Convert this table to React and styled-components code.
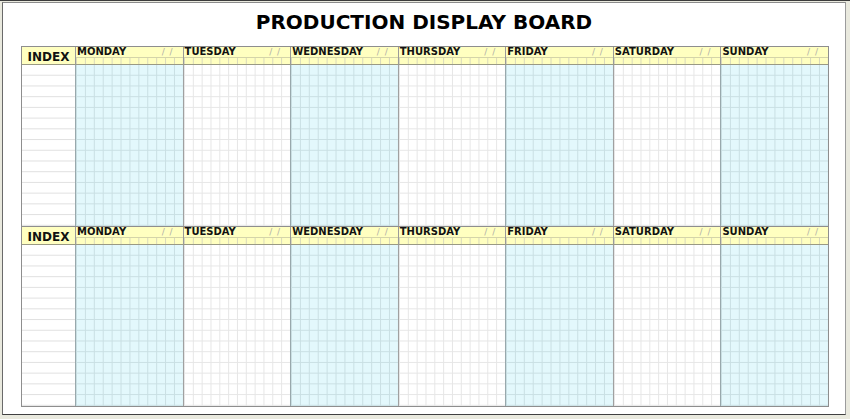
import React from 'react';
import styled, { createGlobalStyle } from 'styled-components';

const DAYS = ['MONDAY', 'TUESDAY', 'WEDNESDAY', 'THURSDAY', 'FRIDAY', 'SATURDAY', 'SUNDAY'];

const GlobalStyle = createGlobalStyle`
  html, body {
    margin: 0;
    padding: 0;
    background: #e9e9de;
  }
  * {
    box-sizing: border-box;
  }
`;

export default function App() {
  return (
    <>
      <GlobalStyle />
      <Frame>
        <Panel>
          <Title>PRODUCTION DISPLAY BOARD</Title>
          <Stack>
            {[0, 1].map(block => (
              <Section key={block}>
                <IndexHead>INDEX</IndexHead>
                {DAYS.map(day => (
                  <DayHead key={day}>
                    <DayLabel>
                      <span>{day}</span>
                      <DateMark>/ /</DateMark>
                    </DayLabel>
                    <SubStrip />
                  </DayHead>
                ))}
                <IndexBody />
                {DAYS.map((day, i) => (
                  <DayBody key={day} $tinted={i % 2 === 0} />
                ))}
              </Section>
            ))}
          </Stack>
        </Panel>
      </Frame>
    </>
  );
}

const Frame = styled.div`
  width: 850px;
  height: 419px;
  border-top: 1px solid #3c3c3c;
  padding: 1px 4px 4px 2px;
  background: #e9e9de;
`;

const Panel = styled.div`
  height: 100%;
  background: #ffffff;
  border-left: 1px solid #6a6a6a;
  border-top: 1px solid #8c8c8c;
  border-right: 1px solid #9c9c9c;
  border-bottom: 1px solid #404040;
  display: flex;
  flex-direction: column;
`;

const Title = styled.h1`
  margin: 0 0 6px;
  height: 37px;
  line-height: 38px;
  text-align: center;
  font-family: 'DejaVu Sans', Verdana, sans-serif;
  font-weight: bold;
  font-size: 20px;
  color: #000;
`;

const Stack = styled.div`
  display: flex;
  flex-direction: column;
  margin-left: 18px;
  width: 808px;
`;

const Section = styled.div`
  display: grid;
  grid-template-columns: 53px repeat(7, 1fr);
  grid-template-rows: 18px 161px;
  border: 1px solid #8e8e8e;
  font-family: 'DejaVu Sans', Verdana, sans-serif;

  & + & {
    border-top: none;
  }
`;

const IndexHead = styled.div`
  background: #ffffc0;
  border-bottom: 1px solid #9a9a84;
  display: flex;
  align-items: center;
  justify-content: center;
  font-size: 12px;
  font-weight: bold;
  color: #111;
  padding-top: 2px;
`;

const DayHead = styled.div`
  display: flex;
  flex-direction: column;
  background: #ffffc0;
  border-left: 1px solid #9a9a9a;
  border-bottom: 1px solid #9a9a84;
`;

const DayLabel = styled.div`
  height: 11px;
  display: flex;
  align-items: flex-end;
  justify-content: space-between;
  padding: 0 9px 0 1px;
  border-bottom: 1px solid #d4d4a8;
  font-size: 10px;
  font-weight: bold;
  line-height: 10px;
  color: #111;
`;

const DateMark = styled.span`
  font-weight: normal;
  font-size: 9px;
  color: #b0b0a8;
  letter-spacing: 1px;
`;

const SubStrip = styled.div`
  flex: 1;
  background-image: linear-gradient(to right, #d8d8bc 1px, transparent 1px);
  background-size: calc(100% / 12) 100%;
`;

const IndexBody = styled.div`
  background-color: #ffffff;
  background-image: linear-gradient(to bottom, transparent calc(100% - 1px), #e0e0e0 calc(100% - 1px));
  background-size: 100% calc(100% / 15);
`;

const DayBody = styled.div`
  border-left: 1px solid ${p => (p.$tinted ? '#98a8ac' : '#a0a0a0')};
  background-color: ${p => (p.$tinted ? '#e3f8fc' : '#ffffff')};
  background-image:
    linear-gradient(to right, ${p => (p.$tinted ? '#c9dfe3' : '#e6e6e6')} 1px, transparent 1px),
    linear-gradient(to bottom, transparent calc(100% - 1px), ${p => (p.$tinted ? '#c9dfe3' : '#e6e6e6')} calc(100% - 1px));
  background-size: calc(100% / 12) calc(100% / 15);
`;
